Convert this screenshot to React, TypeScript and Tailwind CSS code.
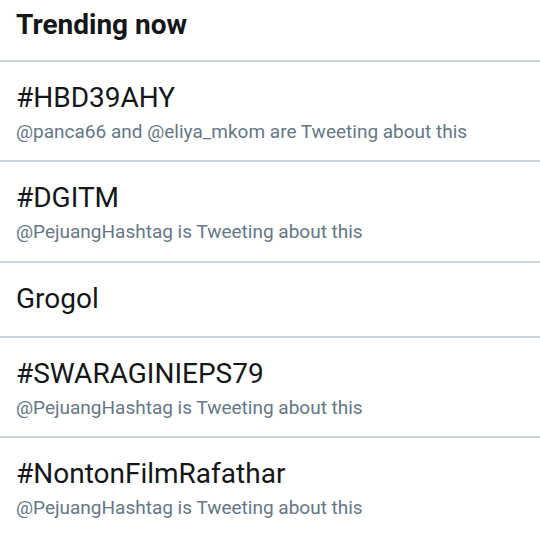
const trends = [
  { name: "#HBD39AHY", context: "@panca66 and @eliya_mkom are Tweeting about this" },
  { name: "#DGITM", context: "@PejuangHashtag is Tweeting about this" },
  { name: "Grogol" },
  { name: "#SWARAGINIEPS79", context: "@PejuangHashtag is Tweeting about this" },
  { name: "#NontonFilmRafathar", context: "@PejuangHashtag is Tweeting about this" },
];

export default function App() {
  return (
    <div className="w-[540px] h-[538px] overflow-hidden bg-white font-['Roboto',sans-serif]">
      <div className="h-[62px] px-4 pt-[9px] border-b-2 border-[#ccd6dd]">
        <h2 className="text-[28px] leading-[32px] font-bold text-[#14171a]">Trending now</h2>
      </div>
      {trends.map((t) => (
        <div
          key={t.name}
          className={`px-4 pt-[20px] border-b-2 border-[#ccd6dd] last:border-b-0 ${t.context ? "h-[100px]" : "h-[75px]"} ${t.name === "#DGITM" ? "h-[101px]" : ""}`}
        >
          <div className="text-[28px] leading-[32px] text-[#14171a]">{t.name}</div>
          {t.context && (
            <div className="mt-[6px] text-[19px] leading-[24px] text-[#657786]">{t.context}</div>
          )}
        </div>
      ))}
    </div>
  );
}
